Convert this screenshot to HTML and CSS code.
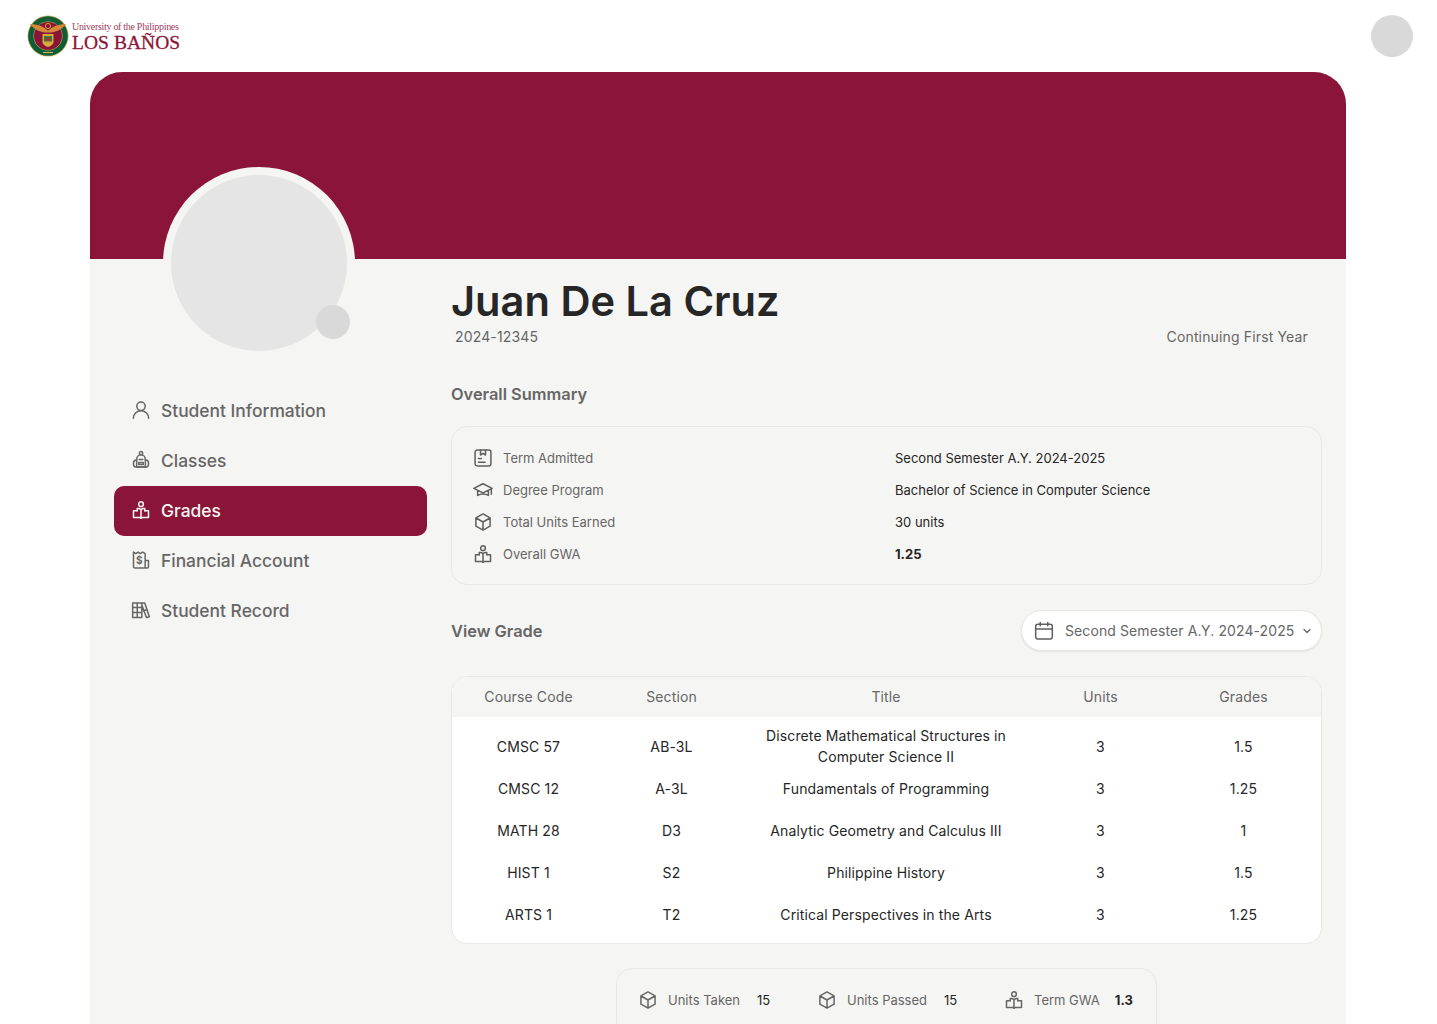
FILE: index.html
```html
<!DOCTYPE html>
<html lang="en">
<head>
<meta charset="utf-8">
<title>Grades</title>
<link rel="stylesheet" href="styles.css">
</head>
<body>
<svg class="sprite" width="0" height="0" aria-hidden="true">
  <defs>
    <symbol id="i-person" viewBox="0 0 24 24"><circle cx="12" cy="7.500" r="5"/><path d="M2.800 22c0-5.200 3.900-9 9.200-9s9.200 3.800 9.200 9"/></symbol>
    <symbol id="i-bag" viewBox="0 0 24 24"><circle cx="12" cy="3.800" r="2"/><path d="M6.800 20.500v-8.700c0-3.400 2.200-6 5.200-6s5.200 2.600 5.200 6v8.700z"/><path d="M6.800 12h-.3C4.500 12 3 13.600 3 15.500v1.500c0 1.900 1.500 3.500 3.500 3.500h11c2 0 3.500-1.600 3.500-3.500v-1.500c0-1.900-1.500-3.500-3.500-3.500h-.3"/><path d="M9.800 11.500h4.400M9.300 15h5.400v2.500H9.300z"/></symbol>
    <symbol id="i-reader" viewBox="0 0 24 24"><circle cx="12" cy="5" r="2.800"/><path d="M7.500 13v-2.700c1.800-.4 3.200.1 4.500 1.200 1.300-1.100 2.700-1.600 4.500-1.200V13"/><path d="M7.500 13H3v8h7.300c.8 0 1.300.3 1.700 1 .4-.7.900-1 1.700-1H21v-8h-4.500M12 11.500V22"/></symbol>
    <symbol id="i-invoice" viewBox="0 0 24 24"><path d="M17 21.500H4.500c-.9 0-1.500-.6-1.500-1.500V2.500l2.800 1.800L8.500 2.500l2.700 1.800L14 2.500l3 1.800v17.200zM17 12.500h3.500c.3 0 .5.200.5.500v7c0 .9-.6 1.500-1.500 1.500H17"/><text x="10" y="17" text-anchor="middle" class="glyph">$</text></symbol>
    <symbol id="i-shelf" viewBox="0 0 24 24"><path d="M2 3.500h5.500V21H2zM7.500 3.500H13V21H7.500zM2 9h11M2 15h11M13 3.500h3.500L22 20l-3.500 1L13 6"/><path d="M14.800 13l4-1.300"/></symbol>
    <symbol id="i-term" viewBox="0 0 24 24"><rect x="2.500" y="2.500" width="19" height="19" rx="2.500"/><path d="M9 2.500v6l3-2 3 2v-6M6.500 12.500h3.500M6.500 17h8"/></symbol>
    <symbol id="i-cap" viewBox="0 0 24 24"><path d="M12 4.500 1 10 12 15.500 23 10zM5.500 12.200v6.300c2-1.200 4.200-1.800 6.500-1.800s4.500.6 6.500 1.800v-6.300M22 10.500v6.500"/></symbol>
    <symbol id="i-box" viewBox="0 0 24 24"><path d="M12 2.300 20.500 7v10L12 21.700 3.500 17V7zM3.700 7.200 12 12l8.300-4.800M12 12v9.500"/></symbol>
    <symbol id="i-cal" viewBox="0 0 24 24"><rect x="2" y="4" width="20" height="17.500" rx="2.500"/><path d="M2 9.500h20M7.500 1.800v4M16.500 1.800v4"/></symbol>
  </defs>
</svg>

<header class="topbar">
  <div class="logo">
    <svg class="seal" viewBox="0 0 42 42" role="img" aria-label="UP Los Baños seal">
      <circle cx="21" cy="21" r="20.500" fill="#c9b45a"/>
      <circle cx="21" cy="21" r="19.800" fill="#0f5c35"/>
      <circle cx="21" cy="21" r="14.500" fill="#c9b45a"/>
      <circle cx="21" cy="21" r="14" fill="#8b1538"/>
      <path d="M3 9c5 .2 10 1 14 3.500l4 3 4-3C29 10 34 9.200 39 9c-2 3-5 5.500-9 7l-5 1.500h-8L12 16C8 14.500 5 12 3 9z" fill="#d4883a"/>
      <circle cx="21" cy="11" r="2.600" fill="#8b1538" stroke="#d99a33"/>
      <path d="M15.500 19h11v8c0 2.500-2.500 4-5.500 5-3-1-5.500-2.500-5.500-5z" fill="#d9a93a"/>
      <path d="M17 21h8v5.500h-8z" fill="#2d7a3c"/>
      <path d="M19.500 22h3v4h-3z" fill="#c7252f"/>
      <path d="M16 37.500h10" stroke="#c9b45a" stroke-width="1.200"/>
    </svg>
    <div class="wordmark">
      <span class="wordmark-top">University of the Philippines</span>
      <span class="wordmark-main">LOS BAÑOS</span>
    </div>
  </div>
  <div class="user-dot"></div>
</header>

<main class="card">
  <div class="banner"></div>
  <div class="card-body">
    <aside class="sidebar">
      <div class="avatar-ring">
        <div class="avatar"></div>
        <div class="avatar-badge"></div>
      </div>
      <nav class="nav">
        <a class="nav-item"><svg class="icon nav-icon"><use href="#i-person"/></svg>Student Information</a>
        <a class="nav-item"><svg class="icon nav-icon"><use href="#i-bag"/></svg>Classes</a>
        <a class="nav-item active"><svg class="icon nav-icon"><use href="#i-reader"/></svg>Grades</a>
        <a class="nav-item"><svg class="icon nav-icon"><use href="#i-invoice"/></svg>Financial Account</a>
        <a class="nav-item"><svg class="icon nav-icon"><use href="#i-shelf"/></svg>Student Record</a>
      </nav>
    </aside>

    <section class="content">
      <h1 class="name">Juan De La Cruz</h1>
      <div class="id-row">
        <span class="student-id">2024-12345</span>
        <span class="standing">Continuing First Year</span>
      </div>

      <h2 class="section-title overall-title">Overall Summary</h2>
      <div class="summary">
        <div class="summary-row">
          <span class="summary-label"><svg class="icon sum-icon"><use href="#i-term"/></svg>Term Admitted</span>
          <span class="summary-value">Second Semester A.Y. 2024-2025</span>
        </div>
        <div class="summary-row">
          <span class="summary-label"><svg class="icon sum-icon"><use href="#i-cap"/></svg>Degree Program</span>
          <span class="summary-value">Bachelor of Science in Computer Science</span>
        </div>
        <div class="summary-row">
          <span class="summary-label"><svg class="icon sum-icon"><use href="#i-box"/></svg>Total Units Earned</span>
          <span class="summary-value">30 units</span>
        </div>
        <div class="summary-row">
          <span class="summary-label"><svg class="icon sum-icon"><use href="#i-reader"/></svg>Overall GWA</span>
          <span class="summary-value strong">1.25</span>
        </div>
      </div>

      <div class="grade-head">
        <h2 class="section-title">View Grade</h2>
        <div class="term-select">
          <svg class="icon cal-icon"><use href="#i-cal"/></svg>
          <span>Second Semester A.Y. 2024-2025</span>
          <svg class="chevron" viewBox="0 0 10 10"><path d="M2 3.500l3 3 3-3"/></svg>
        </div>
      </div>

      <div class="table">
        <div class="tr thead"><span>Course Code</span><span>Section</span><span>Title</span><span>Units</span><span>Grades</span></div>
        <div class="tbody">
          <div class="tr"><span>CMSC 57</span><span>AB-3L</span><span class="title-cell">Discrete Mathematical Structures in Computer Science II</span><span>3</span><span>1.5</span></div>
          <div class="tr"><span>CMSC 12</span><span>A-3L</span><span class="title-cell">Fundamentals of Programming</span><span>3</span><span>1.25</span></div>
          <div class="tr"><span>MATH 28</span><span>D3</span><span class="title-cell">Analytic Geometry and Calculus III</span><span>3</span><span>1</span></div>
          <div class="tr"><span>HIST 1</span><span>S2</span><span class="title-cell">Philippine History</span><span>3</span><span>1.5</span></div>
          <div class="tr"><span>ARTS 1</span><span>T2</span><span class="title-cell">Critical Perspectives in the Arts</span><span>3</span><span>1.25</span></div>
        </div>
      </div>

      <div class="totals">
        <div class="total"><svg class="icon total-icon"><use href="#i-box"/></svg><span class="total-label">Units Taken</span><span class="total-value">15</span></div>
        <div class="total"><svg class="icon total-icon"><use href="#i-box"/></svg><span class="total-label">Units Passed</span><span class="total-value">15</span></div>
        <div class="total"><svg class="icon total-icon"><use href="#i-reader"/></svg><span class="total-label term-label">Term GWA</span><span class="total-value strong">1.3</span></div>
      </div>
    </section>
  </div>
</main>
</body>
</html>
```

FILE: styles.css
```css
* { box-sizing: border-box; }
html, body { margin: 0; height: 1024px; overflow: hidden; background: #fff; }
body { font-family: Inter, "Liberation Sans", sans-serif; color: #262626; }
.sprite { position: absolute; }
.icon { fill: none; stroke: currentColor; stroke-width: 1.8; stroke-linecap: round; stroke-linejoin: round; flex: none; }
.glyph { font: 700 12px Inter, sans-serif; fill: currentColor; stroke: none; }

.topbar { height: 72px; display: flex; align-items: center; justify-content: space-between; padding: 0 24px 1px 27px; }
.logo { display: flex; align-items: center; gap: 3px; }
.seal { width: 42px; height: 42px; }
.wordmark { display: flex; flex-direction: column; padding-top: 1px; font-family: "Liberation Serif", serif; color: #8b1538; }
.wordmark-top { font-size: 10px; line-height: 10px; letter-spacing: -.3px; color: #a0405f; }
.wordmark-main { margin-top: 2px; font-size: 19.500px; line-height: 17px; letter-spacing: .05px; -webkit-text-stroke: .3px #8b1538; }
.user-dot { width: 42px; height: 42px; border-radius: 50%; background: #d9d9d9; }

.card { width: 1256px; margin-left: 90px; height: 952px; background: #f5f5f3; border-radius: 32px 32px 0 0; overflow: hidden; }
.banner { height: 187px; background: #8b1538; }
.card-body { display: flex; gap: 24px; padding: 0 24px; }

.sidebar { width: 313px; flex: none; }
.avatar-ring { position: relative; width: 192px; height: 192px; margin: -92px 0 27px 49px; padding: 8px; border-radius: 50%; background: #f5f5f3; }
.avatar { width: 176px; height: 176px; border-radius: 50%; background: #e5e5e5; }
.avatar-badge { position: absolute; left: 153px; top: 138px; width: 34px; height: 34px; border-radius: 50%; background: #d9d9d9; }
.nav { display: flex; flex-direction: column; }
.nav-item { height: 50px; display: flex; align-items: center; gap: 10px; padding: 0 0 2px 17px; border-radius: 10px; color: #666; font-size: 17.400px; font-weight: 500; }
.nav-item.active { background: #8b1538; color: #f5f5f3; }
.nav-icon { width: 20px; height: 20px; }

.content { flex: 1; min-width: 0; }
.name { margin: 16px 0 0; font-size: 41.600px; line-height: 52px; font-weight: 600; color: #262626; }
.id-row { display: flex; justify-content: space-between; margin-top: -1px; padding: 0 14px 0 4px; font-size: 14px; line-height: 21px; letter-spacing: .15px; color: #666; }
.section-title { margin: 0; font-size: 16.400px; line-height: 24px; font-weight: 600; color: #666; }
.overall-title { margin-top: 35px; }

.summary { margin-top: 20px; height: 159px; padding: 15px 21px; border: 1px solid #e8e8e6; border-radius: 16px; }
.summary-row { height: 32px; display: flex; align-items: center; font-size: 13px; }
.summary-label { width: 422px; display: flex; align-items: center; gap: 10px; color: #666; }
.summary-value { color: #262626; }
.strong { font-weight: 700; }
.sum-icon { width: 20px; height: 20px; color: #5f5f5f; }

.grade-head { margin-top: 25px; height: 41px; display: flex; align-items: center; justify-content: space-between; }
.term-select { width: 301px; height: 41px; display: flex; align-items: center; gap: 11px; padding: 0 9px 0 12px; background: #fff; border: 1px solid #e6e6e4; border-radius: 21px; box-shadow: 0 1px 2px rgba(0,0,0,.08); font-size: 14px; letter-spacing: .1px; color: #666; white-space: nowrap; }
.cal-icon { width: 20px; height: 20px; color: #5f5f5f; }
.chevron { width: 10px; height: 10px; flex: none; margin-left: -3px; fill: none; stroke: #666; stroke-width: 1.300; stroke-linecap: round; stroke-linejoin: round; }

.table { margin-top: 25px; height: 268px; border: 1px solid #e8e8e6; border-radius: 16px; overflow: hidden; background: #fff; }
.tr { display: grid; grid-template-columns: 1fr 1fr 2fr 1fr 1fr; padding: 0 6px 0 5px; text-align: center; align-items: center; font-size: 14px; line-height: 21px; letter-spacing: .12px; min-height: 42px; }
.thead { height: 40px; min-height: 40px; padding-bottom: 2px; background: #f5f5f3; color: #666; }
.tbody { padding-top: 8px; }
.title-cell { padding: 0 16px; }

.totals { margin: 24px auto 0; width: 541px; height: 70px; padding: 22px 21px; display: flex; border: 1px solid #e8e8e6; border-radius: 16px; font-size: 13px; white-space: nowrap; }
.total { display: flex; align-items: center; height: 18px; }
.total:nth-child(1) { width: 179px; }
.total:nth-child(2) { width: 187px; }
.total-icon { width: 20px; height: 20px; color: #666; margin-right: 10px; }
.total-label { color: #666; margin-right: 17px; }
.term-label { margin-right: 15px; }
.total-value { color: #262626; }
```
